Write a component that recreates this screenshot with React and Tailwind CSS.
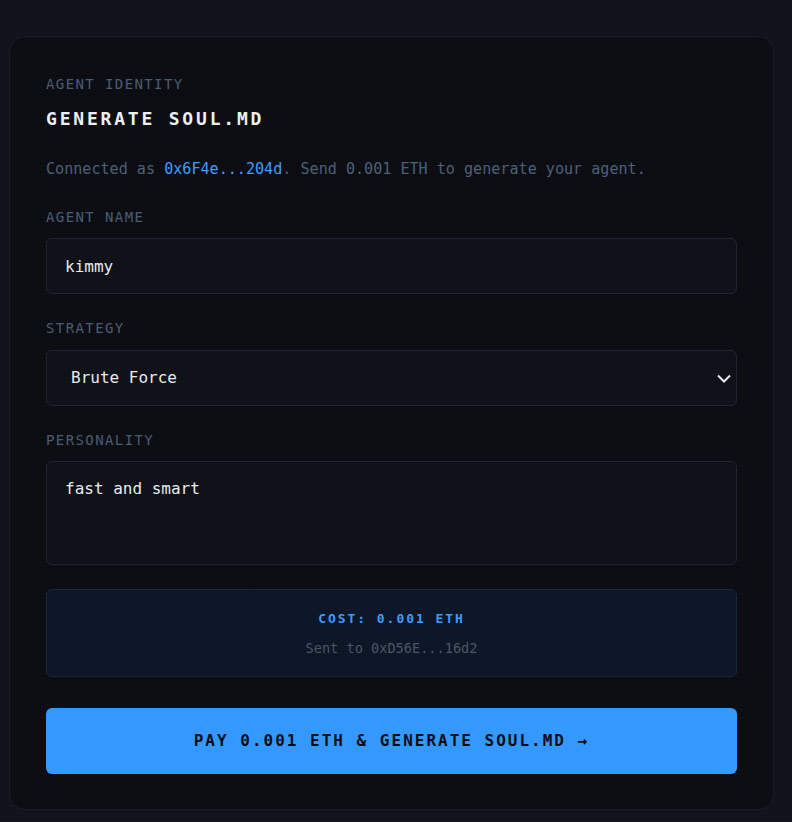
import React, { useState } from "react";

const mono = "font-['DejaVu_Sans_Mono','Liberation_Mono',monospace]";
const label = "block text-[14px] leading-5 tracking-[0.1em] text-[#4a5c72]";
const field =
  "w-full rounded-md border border-[#1c2431] bg-[#0f1119] px-[18px] text-[16px] text-[#e8eaed] outline-none";

export default function App() {
  const [name, setName] = useState("kimmy");
  const [strategy, setStrategy] = useState("brute");
  const [personality, setPersonality] = useState("fast and smart");

  return (
    <div className={`relative min-h-[822px] bg-[#10131a] pt-9 pb-3 ${mono}`}>
      <div className="ml-[9px] w-[765px] rounded-2xl border border-[#161d29] bg-[#0c0d12] px-9 pt-[37px] pb-[35px]">
        <p className={label}>AGENT IDENTITY</p>
        <h1 className="mt-[13px] text-[18px] font-bold leading-6 tracking-[2.8px] text-[#eceef1]">
          GENERATE SOUL.MD
        </h1>
        <p className="mt-[26px] text-[15.1px] leading-6 text-[#4a6079]">
          Connected as <span className="text-[#3b9eff]">0x6F4e...204d</span>. Send 0.001 ETH to
          generate your agent.
        </p>

        <label className={`${label} mt-[26px]`}>AGENT NAME</label>
        <input
          className={`${field} mt-[11px] h-14`}
          value={name}
          onChange={(e) => setName(e.target.value)}
        />

        <label className={`${label} mt-6`}>STRATEGY</label>
        <div className="relative mt-3">
          <select
            className={`${field} h-14 appearance-none !pl-[24px]`}
            value={strategy}
            onChange={(e) => setStrategy(e.target.value)}
          >
            <option value="brute">Brute Force</option>
            <option value="stealth">Stealth</option>
          </select>
          <svg
            className="pointer-events-none absolute right-[5px] top-1/2 h-4 w-4 -translate-y-1/2 text-[#e8eaed]"
            viewBox="0 0 16 16"
            fill="none"
            stroke="currentColor"
            strokeWidth="2"
          >
            <path d="M2 5.5 8 11.5l6-6" />
          </svg>
        </div>

        <label className={`${label} mt-6`}>PERSONALITY</label>
        <textarea
          className={`${field} mt-[11px] block h-[104px] resize-none pt-[15px] leading-6`}
          value={personality}
          onChange={(e) => setPersonality(e.target.value)}
        />

        <div className="mt-6 flex h-[88px] flex-col items-center justify-center rounded-md border border-[#19263a] bg-[#0d1626]">
          <p className="text-[13px] font-bold leading-5 tracking-[0.15em] text-[#3a9bff]">
            COST: 0.001 ETH
          </p>
          <p className="mt-[9px] text-[13.6px] leading-5 text-[#4b5563]">Sent to 0xD56E...16d2</p>
        </div>

        <button className="mt-[31px] flex h-[66px] w-full items-center justify-center rounded-md bg-[#3399ff] text-[16px] font-bold tracking-[2px] text-[#0c0d12]">
          PAY 0.001 ETH &amp; GENERATE SOUL.MD →
        </button>
      </div>
      <div className="pointer-events-none absolute inset-0 bg-[repeating-linear-gradient(0deg,rgba(255,255,255,0.012)_0px,rgba(255,255,255,0.012)_1px,transparent_1px,transparent_4px)]" />
    </div>
  );
}
